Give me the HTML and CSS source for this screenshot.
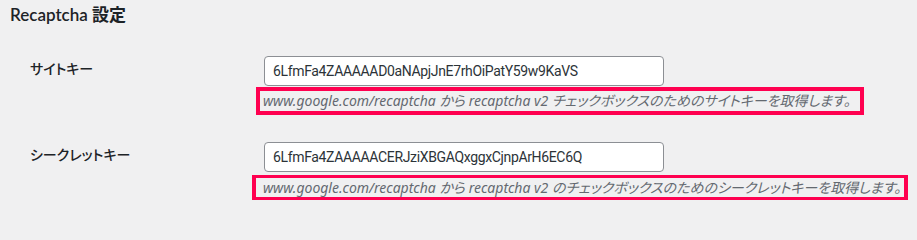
FILE: index.html
```html
<!DOCTYPE html>
<html lang="ja">
<head>
<meta charset="utf-8">
<title>Recaptcha 設定</title>
<link rel="stylesheet" href="styles.css">
</head>
<body>
<div class="wrap">
  <h2 class="title">Recaptcha 設定</h2>
  <div class="form">
    <div class="row">
      <div class="label">サイトキー</div>
      <div class="field">
        <input class="text" type="text" value="6LfmFa4ZAAAAAD0aNApjJnE7rhOiPatY59w9KaVS">
        <p class="desc desc-site">www.google.com/recaptcha から recaptcha v2 チェックボックスのためのサイトキーを取得します。</p>
      </div>
    </div>
    <div class="row row-second">
      <div class="label">シークレットキー</div>
      <div class="field">
        <input class="text" type="text" value="6LfmFa4ZAAAAACERJziXBGAQxggxCjnpArH6EC6Q">
        <p class="desc desc-secret">www.google.com/recaptcha から recaptcha v2 のチェックボックスのためのシークレットキーを取得します。</p>
      </div>
    </div>
  </div>
</div>
</body>
</html>
```

FILE: styles.css
```css
* { box-sizing: border-box; }
html, body { margin: 0; padding: 0; }
body {
  background: #f0f0f1;
  color: #1d2327;
  font-family: "Lato", "Noto Sans CJK JP", sans-serif;
  font-size: 14px;
  width: 917px;
  height: 213px;
  overflow: hidden;
}
.wrap { padding: 0 0 0 10px; }
.title {
  margin: 4px 0 0;
  font-size: 17px;
  font-weight: 600;
  line-height: 22px;
  color: #1d2327;
}
.form { margin-top: 30px; }
.row { display: flex; align-items: flex-start; }
.row-second { margin-top: 27px; }
.label {
  width: 246px;
  padding: 3px 0 0 20px;
  font-weight: 500;
  line-height: 20px;
  font-size: 14px;
  font-feature-settings: "palt";
}
.field { display: flex; flex-direction: column; align-items: flex-start; }
.text {
  margin: 0 0 0 8px;
  width: 400px;
  height: 30px;
  padding: 0 8px;
  border: 1px solid #8c8f94;
  border-radius: 4px;
  background: #fff;
  color: #2c3338;
  font-family: "Roboto", sans-serif;
  font-size: 14px;
  letter-spacing: -0.35px;
  outline: none;
}
.desc {
  margin: 1px 0 0;
  border: 4px solid #ff0050;
  padding: 0 9px 0 3px;
  font-family: "Noto Sans", "Noto Sans CJK JP", sans-serif;
  font-style: italic;
  font-weight: 400;
  font-size: 14px;
  line-height: 20px;
  color: #646970;
  white-space: nowrap;
  font-feature-settings: "palt";
}
.desc-secret {
  margin: 3px 0 0 -4px;
  border-width: 3px 4px 3px 4px;
  padding: 0 3px 0 7px;
  line-height: 19px;
}
```
